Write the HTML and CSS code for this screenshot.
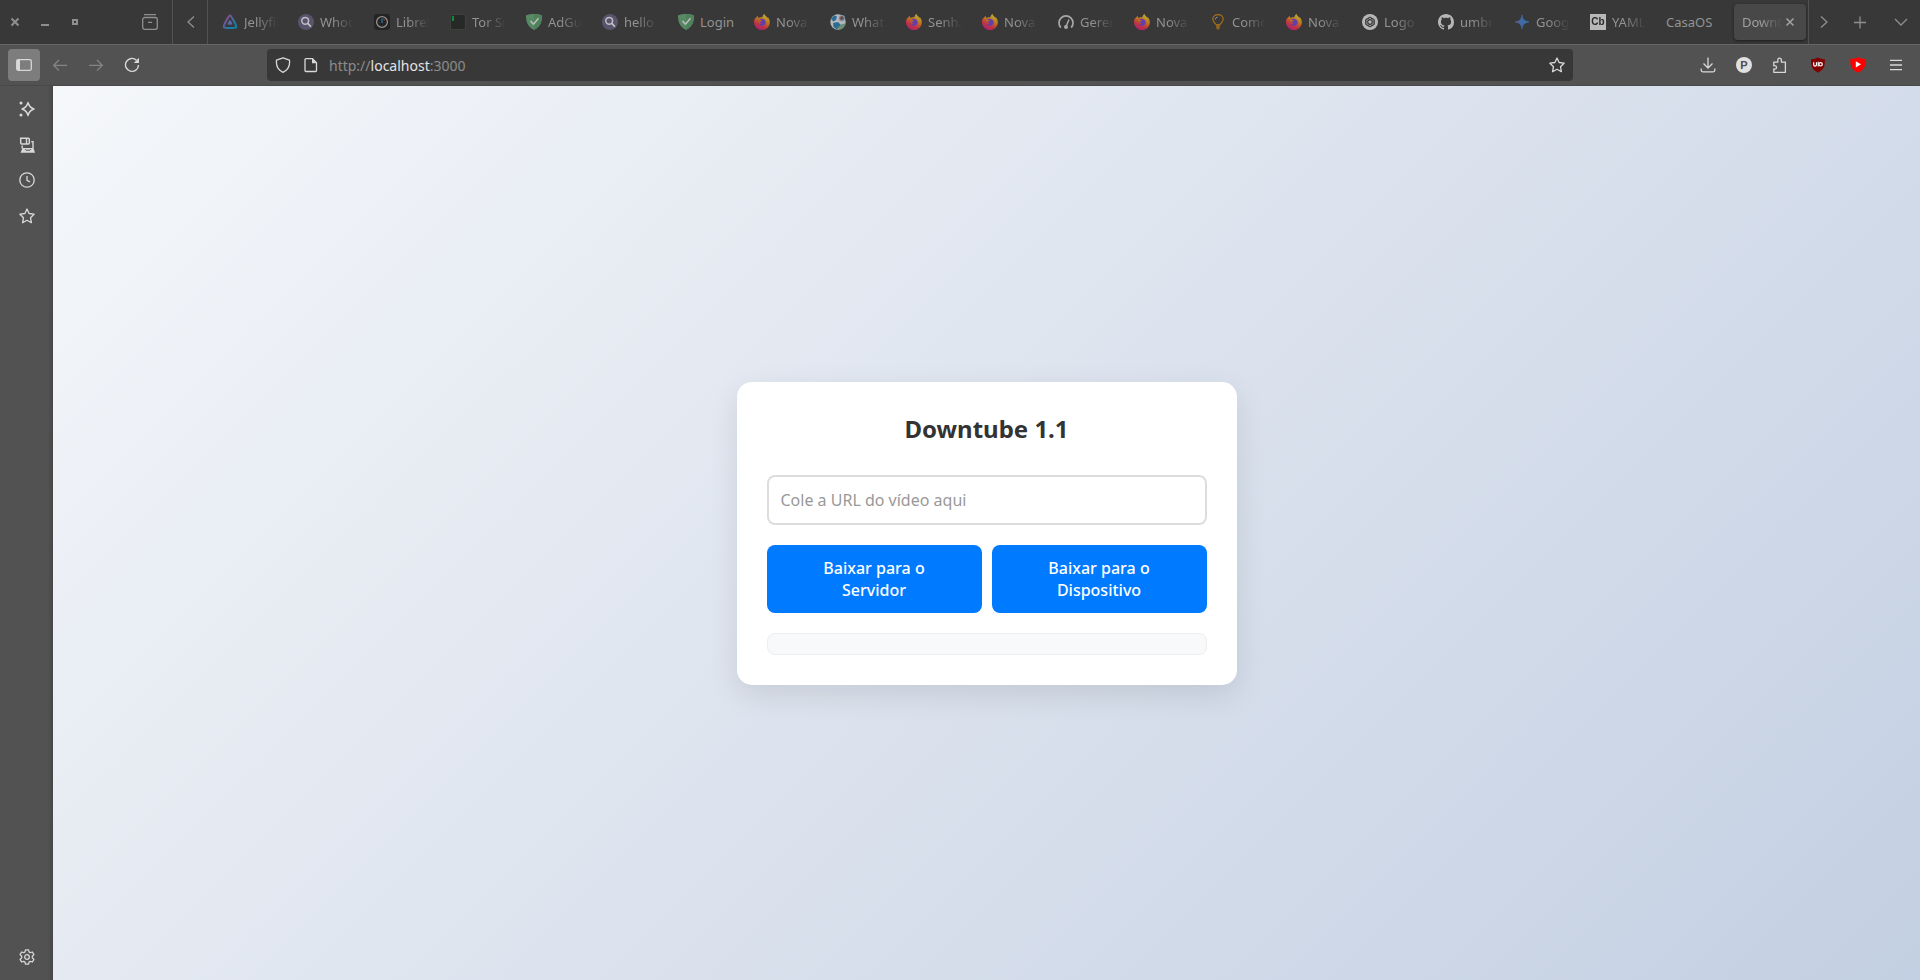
FILE: index.html
```html
<!DOCTYPE html>
<html lang="pt-BR">
<head>
<meta charset="utf-8">
<title>Downtube 1.1</title>
<link rel="stylesheet" href="styles.css">
</head>
<body>
<svg class="defs" width="0" height="0" aria-hidden="true">
  <defs>
    <linearGradient id="g-jelly" x1="0" y1="0" x2="1" y2="1"><stop offset=".2" stop-color="#aa5cc3"/><stop offset=".8" stop-color="#00a4dc"/></linearGradient>
    <linearGradient id="g-fox" x1=".8" y1="0" x2=".3" y2="1"><stop offset="0" stop-color="#fff44f"/><stop offset=".4" stop-color="#ff980e"/><stop offset=".7" stop-color="#ff3647"/><stop offset="1" stop-color="#e31587"/></linearGradient>
    <linearGradient id="g-gem" x1="0" y1="0" x2="1" y2="0"><stop offset="0" stop-color="#8c6fc0"/><stop offset=".5" stop-color="#3f83dc"/><stop offset="1" stop-color="#3c90e8"/></linearGradient>
    <symbol id="search" viewBox="0 0 16 16"><circle cx="8" cy="8" r="8" fill="#6a6087"/><circle cx="7.2" cy="6.8" r="3.4" fill="none" stroke="#fff" stroke-width="1.5"/><path d="M9.8 9.4l2.6 2.8" stroke="#fff" stroke-width="1.8" stroke-linecap="round"/></symbol>
    <symbol id="guard" viewBox="0 0 16 16"><path d="M8 0C5.500 0 2.500.4 0 1.600 0 7 1 12.500 8 16c7-3.500 8-9 8-14.400C13.500.4 10.500 0 8 0z" fill="#67b279"/><path d="M8 0v16c7-3.500 8-9 8-14.400C13.500.4 10.500 0 8 0z" fill="#5ba56c"/><path d="M4.500 7l3 3.200 5-6" fill="none" stroke="#fff" stroke-width="1.500"/></symbol>
    <symbol id="fox" viewBox="0 0 16 16"><path d="M10.500 0c-1.600 1-2 2.500-2 3.300C6.500 3 5.200 3.500 4.500 4 4 3.500 3.800 2.700 3.800 2 2.600 2.700 1.800 3.700 1.500 4.700L1.400 3.500C.5 4.800 0 6.500 0 8.200 0 12.500 3.500 16 7.900 16c4.500 0 7.900-3.500 7.900-7.800 0-2-.8-4-1.900-5l.3 1.500C13.400 2.500 11 2.300 10.500 0z" fill="url(#g-fox)"/><path d="M5 5.500c1.200-.8 4-1 5.500.2 1.500 1.400 1.700 4-.2 5.400-1.800 1.200-4.700.8-5.600-1.100 1 .5 2.500.3 3.400-.8-1.300.3-2.100-.2-2-1 .1-.7 1-.9 1.700-1.100C7.700 6.500 6.500 5.500 5 5.500z" fill="#7542e5"/></symbol>
    <symbol id="star" viewBox="0 0 16 16"><path d="M8 1l2.100 4.500 5 .7-3.600 3.500.9 5L8 12.300 3.600 14.700l.9-5L.9 6.200l5-.7z" fill="none" stroke="currentColor" stroke-width="1.300" stroke-linejoin="round"/></symbol>
  </defs>
</svg>

<header class="tabbar">
  <div class="window-controls">
    <svg class="wc" viewBox="0 0 10 10"><path d="M1.500 1.500l7 7m0-7l-7 7" stroke="currentColor" stroke-width="2"/></svg>
    <svg class="wc" viewBox="0 0 10 10"><path d="M1 8h8" stroke="currentColor" stroke-width="2"/></svg>
    <svg class="wc" viewBox="0 0 10 10"><path d="M3 3h4v4H3z" fill="none" stroke="currentColor" stroke-width="2"/></svg>
  </div>
  <div class="firefox-view"><svg class="icon" viewBox="0 0 16 16"><path d="M2.500.7h11" stroke="currentColor" stroke-width="1.300" stroke-linecap="round"/><path d="M.7 5.500a2 2 0 0 1 2-2h10.600a2 2 0 0 1 2 2v7.800a2 2 0 0 1-2 2H2.700a2 2 0 0 1-2-2zM6 8.300h4" fill="none" stroke="currentColor" stroke-width="1.300"/></svg></div>
  <div class="scroll-left"><svg class="icon" viewBox="0 0 16 16"><path d="M11 2.500L5 8l6 5.500" fill="none" stroke="currentColor" stroke-width="1.300"/></svg></div>
  <nav class="tabs">
    <div class="tab"><svg class="fav" viewBox="0 0 16 16"><path d="M8 1.500c1.200 0 6.800 10.200 6.200 11.500-.6 1.400-11.800 1.400-12.400 0C1.200 11.700 6.800 1.500 8 1.500z" fill="none" stroke="url(#g-jelly)" stroke-width="2"/><path d="M8 6c.6 0 2.700 3.800 2.500 4.300-.3.600-4.700.6-5 0C5.300 9.800 7.400 6 8 6z" fill="#6f7fd8"/></svg><span class="label">Jellyfin</span></div>
    <div class="tab"><svg class="fav"><use href="#search"/></svg><span class="label">Whoogle</span></div>
    <div class="tab"><svg class="fav" viewBox="0 0 16 16"><rect width="16" height="16" rx="3" fill="#1c1c1c"/><circle cx="8" cy="8" r="5.400" fill="none" stroke="#bbb" stroke-width="1.300"/><path d="M8 4.500V9" stroke="#2a8fd0" stroke-width="1.600" opacity=".8"/><path d="M9 4.600l2 1.600" stroke="#c04a30"/></svg><span class="label">LibreSpeed</span></div>
    <div class="tab"><svg class="fav" viewBox="0 0 16 16"><path d="M.5.500h15v15H.5z" fill="#1f2220" stroke="#444"/><path d="M2 2h2v5H2z" fill="#00b34a"/></svg><span class="label">Tor Snowflake</span></div>
    <div class="tab"><svg class="fav"><use href="#guard"/></svg><span class="label">AdGuard</span></div>
    <div class="tab"><svg class="fav"><use href="#search"/></svg><span class="label">hello</span></div>
    <div class="tab"><svg class="fav"><use href="#guard"/></svg><span class="label whole">Login</span></div>
    <div class="tab"><svg class="fav"><use href="#fox"/></svg><span class="label">Nova aba</span></div>
    <div class="tab"><svg class="fav" viewBox="0 0 16 16"><circle cx="8" cy="8" r="7.700" fill="#f0f6fa"/><path d="M1 5l3-3.500 3 1L6 6 3.500 7.500zM3 9l5-1 3 3-1 3-3 1.500L3.500 13z" fill="#2584c0"/><path d="M7 14l5-4 3.500-.5C15 13 11 16 7 15.500z" fill="#83b890"/><circle cx="11.800" cy="4.200" r="3.200" fill="#abc8dd"/><circle cx="11.800" cy="4.200" r="1.700" fill="#2874a6" stroke="#bd5542"/></svg><span class="label">What is</span></div>
    <div class="tab"><svg class="fav"><use href="#fox"/></svg><span class="label">Senhas</span></div>
    <div class="tab"><svg class="fav"><use href="#fox"/></svg><span class="label">Nova aba</span></div>
    <div class="tab"><svg class="fav" viewBox="0 0 16 16"><path d="M2.800 13.600A7 7 0 1 1 13.200 13.600" fill="none" stroke="#ddd" stroke-width="1.700"/><path d="M11 5.500L8 12.500" stroke="#ddd" stroke-width="1.500"/><circle cx="8" cy="13" r="2" fill="#ddd"/></svg><span class="label">Gerenciador</span></div>
    <div class="tab"><svg class="fav"><use href="#fox"/></svg><span class="label">Nova aba</span></div>
    <div class="tab"><svg class="fav" viewBox="0 0 16 16"><path d="M6 10.500C4.500 8.500 2.800 7.500 2.800 5a5.200 4.400 0 0 1 10.400 0c0 2.500-1.700 3.500-3.200 5.500z" fill="none" stroke="#e08a00" stroke-width="1.200"/><path d="M5.700 10.500h4.600l-.7 4L8 16l-1.600-1.500z" fill="#b87510"/><path d="M5.300 5.500Q5.500 3.300 7.500 3" fill="none" stroke="#bbb"/></svg><span class="label">Como</span></div>
    <div class="tab"><svg class="fav"><use href="#fox"/></svg><span class="label">Nova aba</span></div>
    <div class="tab"><svg class="fav" viewBox="0 0 16 16"><circle cx="8" cy="8" r="8" fill="#f2f2f2"/><g fill="none" stroke="#333" stroke-width=".8"><path d="M8 3l4.300 2.500v5L8 13l-4.300-2.500v-5z"/><rect x="6" y="3.500" width="4" height="9" rx="2"/><rect x="6" y="3.500" width="4" height="9" rx="2" transform="rotate(60 8 8)"/><rect x="6" y="3.500" width="4" height="9" rx="2" transform="rotate(120 8 8)"/></g></svg><span class="label">Logo d</span></div>
    <div class="tab"><svg class="fav" viewBox="0 0 16 16"><path fill="#f2f2f2" d="M8 0C3.580 0 0 3.580 0 8c0 3.540 2.290 6.530 5.470 7.590.4.070.55-.17.55-.38 0-.19-.01-.82-.01-1.490-2.010.37-2.530-.49-2.690-.94-.09-.23-.48-.94-.82-1.130-.28-.15-.68-.52-.01-.53.63-.01 1.080.58 1.230.82.72 1.210 1.870.87 2.330.66.07-.52.28-.87.51-1.070-1.780-.2-3.640-.89-3.640-3.950 0-.87.31-1.590.82-2.150-.08-.2-.36-1.020.08-2.120 0 0 .67-.21 2.200.82.64-.18 1.320-.27 2-.27s1.360.09 2 .27c1.530-1.040 2.200-.82 2.200-.82.44 1.100.16 1.920.08 2.120.51.56.82 1.270.82 2.150 0 3.070-1.870 3.750-3.650 3.950.29.25.54.73.54 1.480 0 1.070-.01 1.930-.01 2.200 0 .21.15.46.55.38A8.010 8.010 0 0 0 16 8c0-4.420-3.580-8-8-8z"/></svg><span class="label">umbrel</span></div>
    <div class="tab"><svg class="fav" viewBox="0 0 16 16"><path d="M8 1c.7 4.500 2.500 6.300 7 7-4.500.7-6.300 2.500-7 7-.7-4.500-2.500-6.300-7-7 4.500-.7 6.300-2.500 7-7z" fill="url(#g-gem)" stroke="url(#g-gem)" stroke-width=".6"/></svg><span class="label">Google</span></div>
    <div class="tab"><span class="fav fav-cb">Cb</span><span class="label">YAML C</span></div>
    <div class="tab"><span class="label whole">CasaOS</span></div>
    <div class="tab active"><span class="label">Downtube</span><svg class="close" viewBox="0 0 10 10"><path d="M1.500 1.500l7 7m0-7l-7 7" stroke="currentColor" stroke-width="1.600"/></svg></div>
  </nav>
  <div class="tabbar-end">
    <svg class="icon" viewBox="0 0 16 16"><path d="M5 2.500L11 8l-6 5.500" fill="none" stroke="currentColor" stroke-width="1.300"/></svg>
    <svg class="icon new-tab" viewBox="0 0 16 16"><path d="M8 2.500v12M2 8.500h12" stroke="currentColor" stroke-width="1.300"/></svg>
    <svg class="icon" viewBox="0 0 16 16"><path d="M2 5l6 6 6-6" fill="none" stroke="currentColor" stroke-width="1.300"/></svg>
  </div>
</header>

<div class="toolbar">
  <div class="nav-buttons">
    <div class="btn pressed"><svg class="icon" viewBox="0 0 16 16"><rect x=".7" y="2.700" width="14.600" height="10.600" rx="1.500" fill="none" stroke="currentColor" stroke-width="1.300"/><path d="M1 3h3v10H1z" fill="currentColor"/></svg></div>
    <div class="btn disabled"><svg class="icon" viewBox="0 0 16 16"><path d="M15 8.300H2M7 3L1.700 8.300 7 13.600" fill="none" stroke="currentColor" stroke-width="1.300"/></svg></div>
    <div class="btn disabled"><svg class="icon" viewBox="0 0 16 16"><path d="M1 8.300h13M9 3l5.300 5.300L9 13.600" fill="none" stroke="currentColor" stroke-width="1.300"/></svg></div>
    <div class="btn"><svg class="icon" viewBox="0 0 16 16"><path d="M12.500 3.200A6.500 6.500 0 1 0 14.500 8" fill="none" stroke="currentColor" stroke-width="1.400"/><path d="M15 .8V6H9.800z" fill="currentColor"/></svg></div>
  </div>
  <div class="urlbar">
    <svg class="icon" viewBox="0 0 16 16"><path d="M8 .8l6.500 2.400C15 8 13 13 8 15.300 3 13 1 8 1.500 3.200z" fill="none" stroke="currentColor" stroke-width="1.300" stroke-linejoin="round"/></svg>
    <svg class="icon" viewBox="0 0 16 16"><path d="M3 1.700h6.500l4 4V13.500a1 1 0 0 1-1 1H3a1 1 0 0 1-1-1V2.700a1 1 0 0 1 1-1z" fill="none" stroke="currentColor" stroke-width="1.300"/><path d="M9 1.500v4.700h4.700z" fill="currentColor"/></svg>
    <div class="url">http://<span class="host">localhost</span>:3000</div>
    <svg class="icon"><use href="#star"/></svg>
  </div>
  <div class="extensions">
    <svg class="icon" viewBox="0 0 16 16"><path d="M8 .5v10M3.500 6.500L8 11l4.500-4.500M1.200 11.500v1.800a1.500 1.500 0 0 0 1.500 1.500h10.600a1.500 1.500 0 0 0 1.500-1.500v-1.800" fill="none" stroke="currentColor" stroke-width="1.300"/></svg>
    <span class="avatar">P</span>
    <svg class="icon" viewBox="0 0 16 16"><path d="M2.600 15.300V12c3.600.8 3.600-4 0-3.200V5.200h4V3a1.700 1.700 0 0 1 3.600 0v2.200h4v10.100z" transform="translate(-.8)" fill="none" stroke="currentColor" stroke-width="1.300" stroke-linejoin="round"/></svg>
    <svg class="icon ublock" viewBox="0 0 16 16"><path d="M8 .5c2.500 1.200 4 1.400 6.800 1.500C15 9 14.500 12 8 15.700 1.500 12 1 9 1.200 2 4 1.900 5.500 1.700 8 .5z" fill="#800000"/><path d="M3.700 5.300v2.500a1.400 1.400 0 0 0 2.800 0V5.300" fill="none" stroke="#fff" stroke-width="1.200"/><path d="M8.200 4.800v4.700" stroke="#fff" stroke-width="1.100"/><circle cx="10.600" cy="7.300" r="1.700" fill="none" stroke="#fff" stroke-width="1.200"/></svg>
    <svg class="icon sponsor" viewBox="0 0 16 16"><path d="M8 .3c2.500 1.300 4.500 1.500 7.700 1.700C16 9 14 13 8 15.700 2 13 0 9 .3 2 3.500 1.800 5.500 1.600 8 .3z" fill="#f00"/><path d="M5.800 4.200L11 7.300l-5.200 3.100z" fill="#fff"/></svg>
    <svg class="icon menu" viewBox="0 0 16 16"><path d="M2 3.400h12M2 8h12M2 12.600h12" stroke="currentColor" stroke-width="1.300"/></svg>
  </div>
</div>

<div class="body">
  <aside class="sidebar">
    <svg class="icon" viewBox="0 0 16 16"><path d="M9 1.500c.9 3.800 2.200 5.300 6 6.500-3.800 1.200-5.100 2.700-6 6.500-.9-3.800-2.200-5.300-6-6.500 3.800-1.200 5.100-2.700 6-6.500z" fill="none" stroke="currentColor" stroke-width="1.400" stroke-linejoin="round"/><circle cx="2" cy="2" r="1.500" fill="currentColor"/><circle cx="2" cy="14" r="1.500" fill="currentColor"/></svg>
    <svg class="icon" viewBox="0 0 16 16"><path d="M1.700 1.200h7.600a1 1 0 0 1 1 1v3.800a1 1 0 0 1-1 1H2.700a1 1 0 0 1-1-1z" fill="none" stroke="currentColor" stroke-width="1.500"/><path d="M7.500 1v6M12.300 4.700h1.700v6.600M3.200 8.500v3" fill="none" stroke="currentColor" stroke-width="1.400"/><path d="M3.500 11h11l1.500 4.700H1.500z" fill="currentColor"/><path d="M6 12.200l1 1h4l1-1" fill="none" stroke="#525252"/></svg>
    <svg class="icon history" viewBox="0 0 16 16"><circle cx="8" cy="8" r="7.200" fill="none" stroke="currentColor" stroke-width="1.300"/><path d="M8 4v4.300l3 1.600" fill="none" stroke="currentColor" stroke-width="1.300"/></svg>
    <svg class="icon"><use href="#star"/></svg>
    <svg class="icon settings" viewBox="0 0 16 16"><path d="M6.500.8h3l.5 2.100 1.300.8 2.100-.7 1.500 2.600-1.600 1.600v1.600l1.600 1.600-1.500 2.600-2.100-.7-1.300.8-.5 2.100h-3L6 13.100l-1.300-.8-2.100.7-1.500-2.600 1.600-1.600V7.200L1.100 5.600 2.600 3l2.100.7L6 2.900z" fill="none" stroke="currentColor" stroke-width="1.300" stroke-linejoin="round"/><circle cx="8" cy="8" r="2.300" fill="none" stroke="currentColor" stroke-width="1.300"/></svg>
  </aside>
  <main class="page">
    <section class="card">
      <h1>Downtube 1.1</h1>
      <input class="url-input" type="text" placeholder="Cole a URL do vídeo aqui">
      <div class="actions">
        <button>Baixar para o Servidor</button>
        <button>Baixar para o Dispositivo</button>
      </div>
      <div class="status"></div>
    </section>
  </main>
</div>
</body>
</html>
```
FILE: styles.css
```css
* { box-sizing: border-box; }
body {
  margin: 0;
  height: 980px;
  display: flex;
  flex-direction: column;
  overflow: hidden;
  font-family: "Noto Sans", sans-serif;
  background: #525252;
}
.defs { position: absolute; }
.icon { width: 16px; height: 16px; flex: none; display: block; }

.tabbar {
  height: 45px;
  flex: none;
  display: flex;
  background: #383838;
  border-bottom: 1px solid #666;
  color: #8f8f8f;
}
.window-controls { display: flex; align-items: center; gap: 20px; padding-left: 10px; width: 126px; }
.wc { width: 10px; height: 10px; }
.firefox-view { width: 47px; display: flex; align-items: center; padding-left: 16px; border-right: 1px solid #525252; }
.scroll-left { width: 35px; display: flex; align-items: center; padding-left: 10px; border-right: 1px solid #525252; }
.tabs { display: flex; padding: 4px 0 4px 4px; width: 1601px; border-right: 1px solid #525252; }
.tab {
  width: 72px;
  margin: 0 2px;
  height: 36px;
  flex: none;
  display: flex;
  align-items: center;
  gap: 6px;
  padding: 0 8px;
  border-radius: 4px;
  font-size: 13px;
  color: #939393;
}
.fav { width: 16px; height: 16px; flex: none; opacity: .68; }
.fav-cb { background: #f5f5f5; color: #222; font: bold 10px/16px "Liberation Sans", sans-serif; text-align: center; }
.label {
  flex: 1;
  min-width: 0;
  overflow: hidden;
  white-space: nowrap;
  -webkit-mask-image: linear-gradient(to left, transparent 0, #000 22px);
  mask-image: linear-gradient(to left, transparent 0, #000 22px);
}
.label.whole { -webkit-mask-image: none; mask-image: none; overflow: visible; }
.active { background: #484848; box-shadow: 0 1px 3px rgba(0, 0, 0, .5); gap: 3px; color: #a0a0a0; }
.close { width: 10px; height: 10px; flex: none; margin-right: 3px; }
.tabbar-end { flex: 1; display: flex; align-items: center; padding-left: 7px; }
.new-tab { margin: 0 25px 0 20px; }

.toolbar { height: 41px; flex: none; display: flex; align-items: center; color: #d8d8d8; padding-left: 8px; border-bottom: 1px solid #494949; }
.nav-buttons { display: flex; gap: 4px; width: 259px; }
.btn { width: 32px; height: 32px; border-radius: 4px; display: grid; place-items: center; }
.pressed { background: #7d7d7d; }
.disabled { color: #858585; }
.urlbar { width: 1306px; height: 32px; border-radius: 4px; background: #383838; display: flex; align-items: center; gap: 12px; padding: 0 8px; }
.url { flex: 1; margin-left: -2px; font-size: 14px; color: #8c8c8c; }
.host { color: #e4e4e4; }
.extensions { display: flex; align-items: center; gap: 20px; padding-left: 127px; }
.ublock { margin-left: 2px; }
.sponsor { margin-left: 4px; }
.menu { margin-left: 2px; }
.avatar { width: 16px; height: 16px; border-radius: 50%; background: #e0e0e0; color: #4c4c4c; font: bold 11px/16px "Liberation Sans", sans-serif; text-align: center; }

.body { flex: 1; display: flex; min-height: 0; }
.sidebar {
  width: 53px;
  flex: none;
  display: flex;
  flex-direction: column;
  gap: 20px;
  padding: 15px 0 15px 19px;
  color: #d8d8d8;
  background: linear-gradient(to right, transparent 48px, #464646 53px);
}
.history { margin-top: -1px; }
.settings { margin-top: auto; }
.page { flex: 1; display: flex; align-items: center; justify-content: center; background: linear-gradient(135deg, #f5f7fa 0%, #c3cfe2 100%); }
.card { width: 500px; padding: 30px; border-radius: 15px; background: #fff; box-shadow: 0 10px 30px rgba(0, 0, 0, .1); }
h1 { margin: 0 0 30px; font-size: 24px; line-height: 33px; font-weight: 700; color: #333; text-align: center; }
.url-input { display: block; width: 100%; height: 50px; padding: 12px; border: 2px solid #ddd; border-radius: 8px; font: 16px/22px "Noto Sans", sans-serif; background: #fff; }
.url-input::placeholder { color: #999; opacity: 1; }
.actions { display: flex; gap: 10px; margin: 20px 0; }
.actions button { flex: 1 1 0; height: 68px; padding: 12px 24px; border: 0; border-radius: 8px; background: #007bff; color: #fff; font: 500 16px/22px "Noto Sans", sans-serif; }
.status { height: 22px; border: 1px solid #eee; border-radius: 8px; background: #f8f9fa; }
```
